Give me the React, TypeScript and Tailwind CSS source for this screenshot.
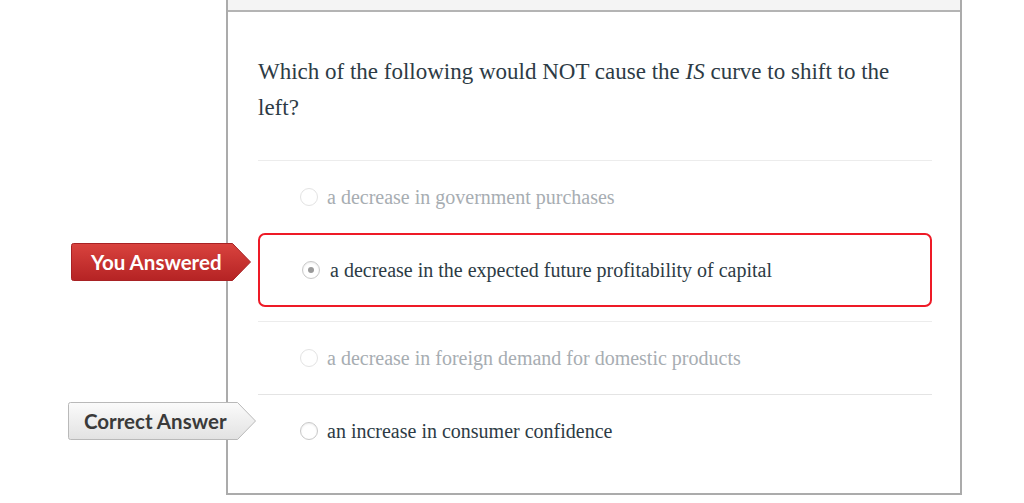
import React from "react";

const serif = { fontFamily: '"Liberation Serif", "Times New Roman", serif' };
const lato = { fontFamily: 'Lato, "Open Sans", sans-serif' };

function Radio({ checked = false, faded = false }: { checked?: boolean; faded?: boolean }) {
  return (
    <span
      className={`flex h-[18px] w-[18px] shrink-0 items-center justify-center rounded-full border bg-white ${
        faded ? "border-[#e3e3e3]" : "border-[#c8c8c8] shadow-[inset_0_1px_2px_rgba(0,0,0,0.08)]"
      }`}
    >
      {checked && <span className="h-[6px] w-[6px] rounded-full bg-[#9a9a9a]" />}
    </span>
  );
}

function Tag({
  label,
  width,
  height,
  arrow,
  pad,
  variant,
}: {
  label: string;
  width: number;
  height: number;
  arrow: number;
  pad: number;
  variant: "red" | "gray";
}) {
  const id = variant === "red" ? "gRed" : "gGray";
  const w = width;
  const h = height;
  return (
    <div className="relative" style={{ width: w, height: h }}>
      <svg width={w} height={h} className="absolute left-0 top-0" viewBox={`0 0 ${w} ${h}`}>
        <defs>
          {variant === "red" ? (
            <linearGradient id={id} x1="0" y1="0" x2="0" y2="1">
              <stop offset="0" stopColor="#d9433e" />
              <stop offset="1" stopColor="#b52324" />
            </linearGradient>
          ) : (
            <linearGradient id={id} x1="0" y1="0" x2="0" y2="1">
              <stop offset="0" stopColor="#fbfbfb" />
              <stop offset="1" stopColor="#e2e2e2" />
            </linearGradient>
          )}
        </defs>
        <path
          d={`M2.5 0.5 H${w - arrow - 0.5} L${w - 0.5} ${h / 2} L${w - arrow - 0.5} ${h - 0.5} H2.5 Q0.5 ${h - 0.5} 0.5 ${h - 2.5} V2.5 Q0.5 0.5 2.5 0.5 Z`}
          fill={`url(#${id})`}
          stroke={variant === "red" ? "#a82224" : "#b9b9b9"}
          strokeWidth="1"
        />
      </svg>
      <span
        className={`absolute inset-y-0 left-0 flex items-center whitespace-nowrap text-[20.5px] font-bold ${
          variant === "red" ? "text-white" : "text-[#3a3a3a]"
        }`}
        style={{ ...lato, paddingLeft: pad }}
      >
        {label}
      </span>
    </div>
  );
}

export default function App() {
  return (
    <div className="relative h-[503px] w-[1024px] overflow-hidden bg-white">
      <div className="ml-[226px] flex h-[495px] w-[736px] flex-col border-x-2 border-b-2 border-[#ababab]">
        <div className="h-[12px] shrink-0 border-b-2 border-[#b4b4b4] bg-[#f4f4f4]" />
        <div className="pl-[30px] pr-[28px] pt-[42px]">
          <p className="text-[23px] leading-[36px] text-[#2d3b45]" style={serif}>
            Which of the following would NOT cause the <i>IS</i> curve to shift to the left?
          </p>
          <div className="mt-[34px] border-t border-[#ececec]">
            <div className="flex h-[72px] items-center gap-[9px] pl-[42px] text-[20px] text-[#a7adb2]" style={serif}>
              <Radio faded />
              <span>a decrease in government purchases</span>
            </div>
            <div
              className="flex h-[74px] items-center gap-[10px] rounded-[7px] border-2 border-[#ee1a26] pl-[42px] text-[20px] text-[#2d3b45]"
              style={serif}
            >
              <Radio checked />
              <span>a decrease in the expected future profitability of capital</span>
            </div>
            <div className="mt-[14px] border-t border-[#ececec]">
              <div className="flex h-[72px] items-center gap-[9px] pl-[42px] text-[20px] text-[#a7adb2]" style={serif}>
                <Radio faded />
                <span>a decrease in foreign demand for domestic products</span>
              </div>
            </div>
            <div className="border-t border-[#e4e4e4]">
              <div className="flex h-[72px] items-center gap-[9px] pl-[42px] text-[20px] text-[#2d3b45]" style={serif}>
                <Radio />
                <span>an increase in consumer confidence</span>
              </div>
            </div>
          </div>
        </div>
      </div>

      <div className="absolute left-[71px] top-[243px]">
        <Tag label="You Answered" width={180} height={38} arrow={18} pad={20} variant="red" />
      </div>
      <div className="absolute left-[68px] top-[402px]">
        <Tag label="Correct Answer" width={188} height={38} arrow={18} pad={16} variant="gray" />
      </div>
    </div>
  );
}
